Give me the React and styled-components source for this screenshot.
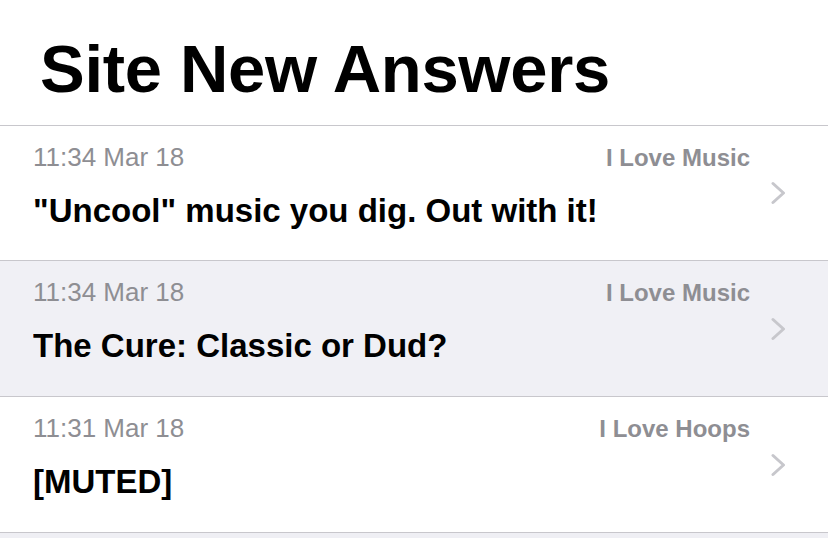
import React from "react";
import styled, { createGlobalStyle } from "styled-components";

const GlobalStyle = createGlobalStyle`
  html, body {
    margin: 0;
    padding: 0;
    background: #efeff4;
    font-family: "Liberation Sans", Arial, sans-serif;
    -webkit-font-smoothing: antialiased;
  }
`;

const Page = styled.div`
  width: 828px;
  min-height: 538px;
  background: #efeff4;
`;

const Header = styled.header`
  background: #ffffff;
  height: 126px;
  box-sizing: border-box;
  padding: 29px 0 0 40px;
  border-bottom: 1px solid #c8c7cc;
`;

const Title = styled.h1`
  margin: 0;
  font-size: 67px;
  line-height: 80px;
  font-weight: 700;
  letter-spacing: -0.3px;
  color: #000;
`;

const List = styled.ul`
  list-style: none;
  margin: 0;
  padding: 0;
`;

const Row = styled.li`
  display: flex;
  align-items: center;
  height: 134px;
  border-bottom: 1px solid #c8c7cc;
  background: ${(p) => (p.$highlighted ? "#f0f0f5" : "#ffffff")};
  padding: 0 42px 0 33px;
  & + & {
    height: 135px;
  }
`;

const Content = styled.div`
  flex: 1;
  display: flex;
  flex-direction: column;
  gap: 20px;
  align-self: flex-start;
  padding-top: 16px;
  min-width: 0;
`;

const Meta = styled.div`
  display: flex;
  justify-content: space-between;
  align-items: baseline;
  height: 30px;
`;

const Time = styled.span`
  font-size: 26px;
  line-height: 30px;
  color: #8e8e93;
`;

const Forum = styled.span`
  font-size: 24px;
  line-height: 30px;
  font-weight: 700;
  color: #8e8e93;
`;

const Subject = styled.div`
  font-size: 33px;
  line-height: 38px;
  font-weight: 700;
  color: #000;
  white-space: nowrap;
  overflow: hidden;
  text-overflow: ellipsis;
`;

const ChevronWrap = styled.span`
  display: flex;
  margin-left: 21px;
  flex: none;
`;

const Chevron = () => (
  <ChevronWrap>
    <svg width="15" height="24" viewBox="0 0 15 24" fill="none">
      <path
        d="M2 2.5 L12.5 12 L2 21.5"
        stroke="#c7c7cc"
        strokeWidth="3"
        strokeLinecap="round"
        strokeLinejoin="round"
      />
    </svg>
  </ChevronWrap>
);

const items = [
  { time: "11:34 Mar 18", forum: "I Love Music", subject: "\"Uncool\" music you dig. Out with it!" },
  { time: "11:34 Mar 18", forum: "I Love Music", subject: "The Cure: Classic or Dud?", highlighted: true },
  { time: "11:31 Mar 18", forum: "I Love Hoops", subject: "[MUTED]" },
];

export default function App() {
  return (
    <Page>
      <GlobalStyle />
      <Header>
        <Title>Site New Answers</Title>
      </Header>
      <List>
        {items.map((it, i) => (
          <Row key={i} $highlighted={it.highlighted}>
            <Content>
              <Meta>
                <Time>{it.time}</Time>
                <Forum>{it.forum}</Forum>
              </Meta>
              <Subject>{it.subject}</Subject>
            </Content>
            <Chevron />
          </Row>
        ))}
      </List>
    </Page>
  );
}
